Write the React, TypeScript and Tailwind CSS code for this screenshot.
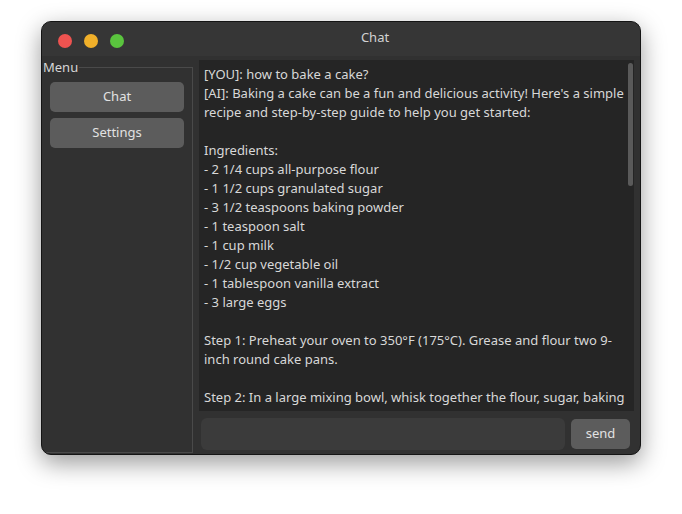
import React from "react"

const lines = [
  "[YOU]: how to bake a cake?",
  "[AI]: Baking a cake can be a fun and delicious activity! Here's a simple",
  "recipe and step-by-step guide to help you get started:",
  "",
  "Ingredients:",
  "- 2 1/4 cups all-purpose flour",
  "- 1 1/2 cups granulated sugar",
  "- 3 1/2 teaspoons baking powder",
  "- 1 teaspoon salt",
  "- 1 cup milk",
  "- 1/2 cup vegetable oil",
  "- 1 tablespoon vanilla extract",
  "- 3 large eggs",
  "",
  "Step 1: Preheat your oven to 350°F (175°C). Grease and flour two 9-",
  "inch round cake pans.",
  "",
  "Step 2: In a large mixing bowl, whisk together the flour, sugar, baking",
]

export default function App() {
  return (
    <div
      className="w-[682px] h-[514px] bg-white pl-[41px] pt-[21px]"
      style={{ fontFamily: '"Noto Sans", sans-serif' }}
    >
      <div className="w-[600px] h-[434px] flex flex-col rounded-[10px] border border-[#141414] bg-[#313131] overflow-hidden shadow-[0_8px_24px_rgba(0,0,0,0.4)]">
        {/* Title bar */}
        <div className="h-[34px] flex items-center bg-[#363636] pl-4">
          <div className="flex items-center gap-3 mt-[3px]">
            <span className="w-[14px] h-[14px] rounded-full bg-[#ee5350]" />
            <span className="w-[14px] h-[14px] rounded-full bg-[#f1b02a]" />
            <span className="w-[14px] h-[14px] rounded-full bg-[#5ac43e]" />
          </div>
          <div className="flex-1 text-center pr-[14px] pb-[4px] text-[13px] text-[#d2d2d2] leading-none">
            Chat
          </div>
        </div>

        {/* Body */}
        <div className="flex-1 flex min-h-0">
          <fieldset className="w-[151px] mt-[4px] mb-px border-t border-r border-b border-l-0 border-[#4a4a4a] px-0 flex flex-col">
            <legend className="text-[13px] leading-[14px] text-[#d6d6d6] pl-px pr-px">Menu</legend>
            <div className="flex flex-col gap-[6px] pl-[8px] pr-[8px] pt-[8px]">
              <button className="h-[30px] rounded-[5px] bg-[#5c5c5c] text-[13px] text-[#e2e2e2]">Chat</button>
              <button className="h-[30px] rounded-[5px] bg-[#5c5c5c] text-[13px] text-[#e2e2e2]">Settings</button>
            </div>
          </fieldset>

          <div className="flex-1 flex flex-col ml-[6px] mr-[6px] pt-[4px] pb-[4px]">
            <div className="relative h-[351px] bg-[#252525] overflow-hidden pl-[5px] pt-[5px]">
              {lines.map((l, i) => (
                <div key={i} className="h-[19px] leading-[19px] text-[13px] text-[#d8d8d8] whitespace-nowrap">
                  {l}
                </div>
              ))}
              <div className="absolute right-[1px] top-[3px] w-[5px] h-[123px] rounded-full bg-[#5a5a5a]" />
            </div>
            <div className="flex items-center gap-[6px] mt-[7px] pl-[2px] pr-[4px]">
              <div className="flex-1 h-[32px] rounded-[6px] bg-[#3b3b3b]" />
              <button className="w-[59px] h-[30px] rounded-[5px] bg-[#5c5c5c] text-[13px] text-[#e2e2e2]">send</button>
            </div>
          </div>
        </div>
      </div>
    </div>
  )
}
